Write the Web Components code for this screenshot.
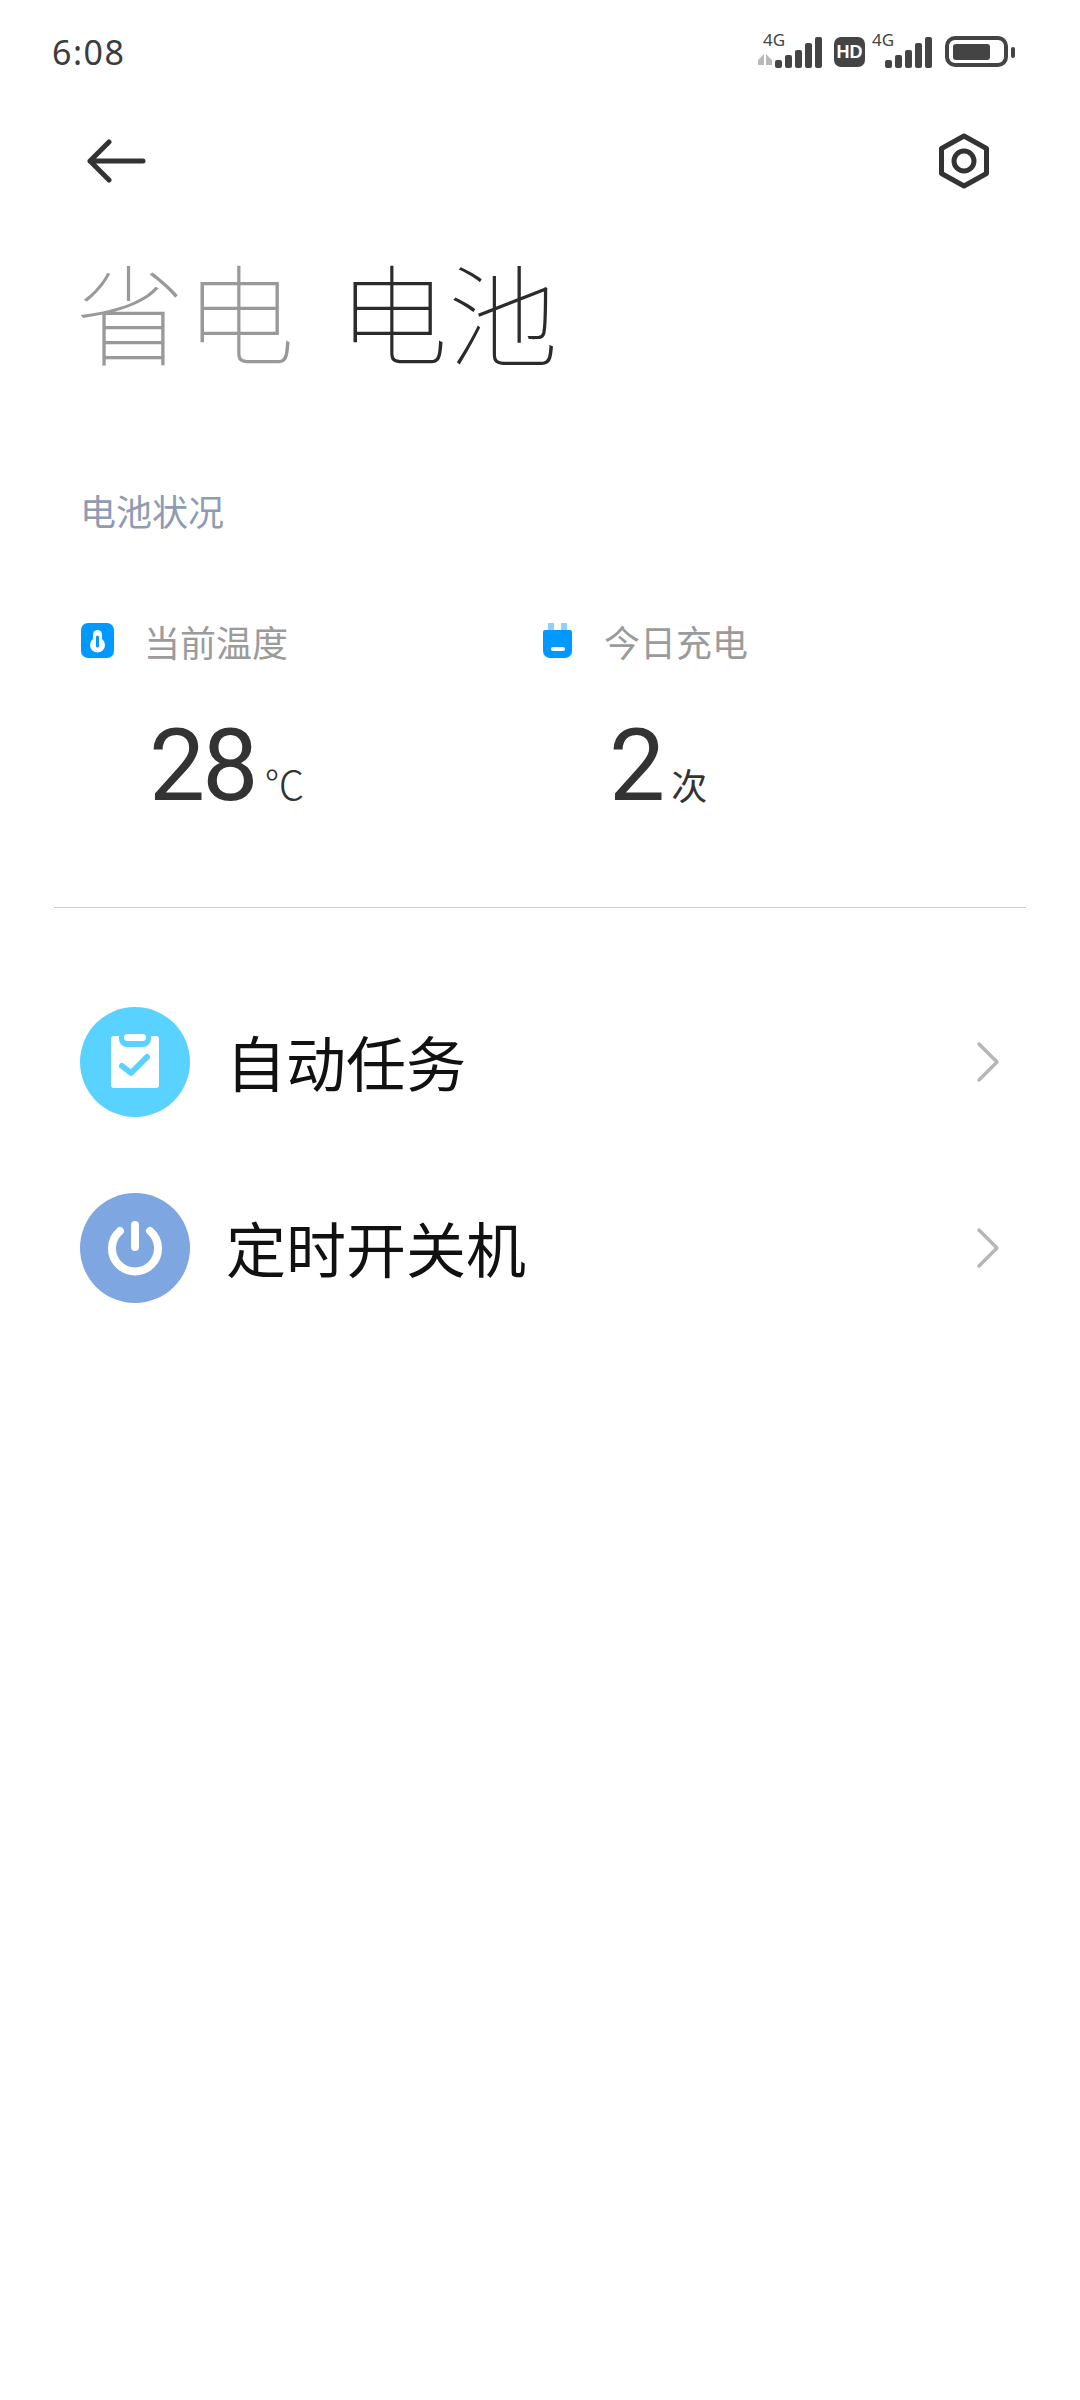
<!DOCTYPE html>
<html lang="zh-CN"><head><meta charset="utf-8"><title>电池</title>
<style>
html,body{margin:0;padding:0;background:#fff}
body{width:1080px;height:2400px;overflow:hidden;font-family:"Noto Sans CJK SC","Noto Sans",sans-serif}
</style></head><body>
<battery-page></battery-page>
<script>
const CJK='"Noto Sans CJK SC","Noto Sans",sans-serif';
function def(name,html){
  customElements.define(name,class extends HTMLElement{
    constructor(){super();this.attachShadow({mode:'open'}).innerHTML=html;}
  });
}
def('status-bar',`<style>
:host{display:flex;justify-content:space-between;align-items:center;height:104px;padding:0 62px 0 52px;box-sizing:border-box;color:#3c3c3c}
.t{font:400 34px/1 "Noto Sans",sans-serif;letter-spacing:1.5px}
svg{display:block;margin-top:-6px}
</style><span class="t">6:08</span>
<svg width="260" height="40" viewBox="0 0 260 40">
 <g font-family="Noto Sans,sans-serif" font-size="17" fill="#444"><text x="5" y="17">4G</text><text x="114" y="17">4G</text></g>
 <g fill="#b9b9b9"><path d="M0 31l6-6v11H0zM8 25l6 6v5H8z"/></g>
 <g fill="#444">
  <rect x="17" y="31" width="7" height="8" rx="2"/><rect x="27" y="26" width="7" height="13" rx="2"/><rect x="37" y="21" width="7" height="18" rx="2"/><rect x="47" y="14" width="7" height="25" rx="2"/><rect x="57" y="8" width="7" height="31" rx="2"/>
  <rect x="127" y="31" width="7" height="8" rx="2"/><rect x="137" y="26" width="7" height="13" rx="2"/><rect x="147" y="21" width="7" height="18" rx="2"/><rect x="157" y="14" width="7" height="25" rx="2"/><rect x="167" y="8" width="7" height="31" rx="2"/>
  <rect x="76" y="8" width="31" height="30" rx="7"/>
  <rect x="189" y="9" width="59" height="27" rx="8" fill="none" stroke="#444" stroke-width="4"/>
  <rect x="195" y="15" width="37" height="16" rx="3"/>
  <rect x="253" y="18" width="4" height="11" rx="2"/>
 </g>
 <text x="91.5" y="29" text-anchor="middle" font-family="Liberation Sans,sans-serif" font-weight="700" font-size="18" fill="#fff">HD</text>
</svg>`);
def('tool-bar',`<style>
:host{display:flex;justify-content:space-between;align-items:center;height:64px;padding:0 90px 0 86px;margin-top:25px}
svg{display:block}
</style>
<svg width="60" height="44" viewBox="0 0 60 44" fill="none" stroke="#333" stroke-width="5" stroke-linecap="round" stroke-linejoin="round"><path d="M57 22H4M23 3 4 22l19 19"/></svg>
<svg width="52" height="56" viewBox="0 0 52 56" fill="none" stroke="#333" stroke-linejoin="round"><path stroke-width="5" d="M26 3 48.500 15.500v25L26 53 3.500 40.500v-25z"/><circle cx="26" cy="28" r="10" stroke-width="5"/></svg>`);
def('page-tabs',`<style>
:host{display:flex;gap:43px;padding:42px 0 0 75px;font:100 110px/150px ${CJK};height:150px}
.off{color:#999}.on{color:#2b2b2b}
</style><span class="off">省电</span><span class="on">电池</span>`);
def('section-label',`<style>
:host{display:block;padding:0 0 0 80px;font:400 36px/50px ${CJK};color:#8f9bb3}
</style><slot></slot>`);
def('stat-item',`<style>
:host{display:block;width:460px}
.h{display:flex;align-items:center;height:50px;font:400 36px/50px ${CJK};color:#9b9b9b;gap:28px}
.ic{width:36px;height:36px;display:flex;justify-content:center}
.v{display:flex;align-items:baseline;padding:50px 0 0 69px;color:#333;font:400 100px/100px Roboto,sans-serif;letter-spacing:-3px;gap:9px}
.u{font:300 36px/1 ${CJK};letter-spacing:0}
</style><div class="h"><span class="ic"><slot name="icon"></slot></span><slot name="label"></slot></div>
<div class="v"><slot name="value"></slot><span class="u"><slot name="unit"></slot></span></div>`);
def('nav-row',`<style>
:host{display:flex;align-items:center;height:186px;padding:0 80px;box-sizing:border-box;font:400 60px/1 ${CJK};color:#111}
.c{width:110px;height:110px;border-radius:50%;background:var(--c);display:flex;align-items:center;justify-content:center;margin-right:36px}
.t{flex:1;padding-bottom:2px}
svg{display:block}
</style><span class="c"><slot name="icon"></slot></span><span class="t"><slot></slot></span>
<svg width="24" height="42" viewBox="0 0 24 42" fill="none" stroke="#b6b6b6" stroke-width="3.500" stroke-linecap="round" stroke-linejoin="round"><path d="M3 3 21 21 3 39"/></svg>`);
def('battery-page',`<style>
:host{display:block;width:1080px}
.stats{display:flex;padding:81px 0 0 80px}
hr{border:0;height:1px;background:#cfcfcf;margin:91px 54px 0}
.spacer{height:61px}
.gap{height:100px}
svg{display:block}
</style>
<status-bar></status-bar>
<tool-bar></tool-bar>
<page-tabs></page-tabs>
<div class="gap"></div>
<section-label>电池状况</section-label>
<div class="stats">
 <stat-item>
  <svg slot="icon" width="36" height="36" viewBox="0 0 36 36"><rect x="1" width="33" height="35" rx="7" fill="#09f"/><path d="M17.500 11.500v10" stroke="#fff" stroke-width="9" stroke-linecap="round"/><circle cx="17.500" cy="22" r="7.500" fill="#fff"/><path d="M17.500 14v9" stroke="#09f" stroke-width="3" stroke-linecap="round"/></svg>
  <span slot="label">当前温度</span><span slot="value">28</span><span slot="unit" style="font-size:40px">℃</span>
 </stat-item>
 <stat-item>
  <svg slot="icon" width="36" height="36" viewBox="0 0 36 36"><path d="M8 0h6v9H8zM21 0h6v9h-6z" fill="#8fd0ff"/><path d="M5 7h25a2 2 0 0 1 2 2v19a7 7 0 0 1-7 7H10a7 7 0 0 1-7-7V9a2 2 0 0 1 2-2z" fill="#09f"/><rect x="11" y="24" width="14" height="4" rx="2" fill="#fff"/></svg>
  <span slot="label">今日充电</span><span slot="value">2</span><span slot="unit" style="font-weight:400">次</span>
 </stat-item>
</div>
<hr>
<div class="spacer"></div>
<nav-row style="--c:#5ad2ff">
 <svg slot="icon" width="56" height="60" viewBox="0 0 56 60"><path d="M7 4h5v3a8 8 0 0 0 8 8h16a8 8 0 0 0 8-8V4h5a3 3 0 0 1 3 3v46a3 3 0 0 1-3 3H7a3 3 0 0 1-3-3V7a3 3 0 0 1 3-3z" fill="#fff"/><rect x="17" y="2" width="22" height="7" rx="3.500" fill="#fff"/><path d="M15 34l9 7 16-16" fill="none" stroke="#5ad2ff" stroke-width="6" stroke-linecap="round" stroke-linejoin="round"/></svg>
 自动任务
</nav-row>
<nav-row style="--c:#7ea6e0">
 <svg slot="icon" width="56" height="56" viewBox="0 0 56 56" fill="none" stroke="#fff" stroke-width="8" stroke-linecap="round"><path d="M13 11a23 23 0 1 0 30 0"/><path d="M28 5v22"/></svg>
 定时开关机
</nav-row>`);
</script>
</body></html>
